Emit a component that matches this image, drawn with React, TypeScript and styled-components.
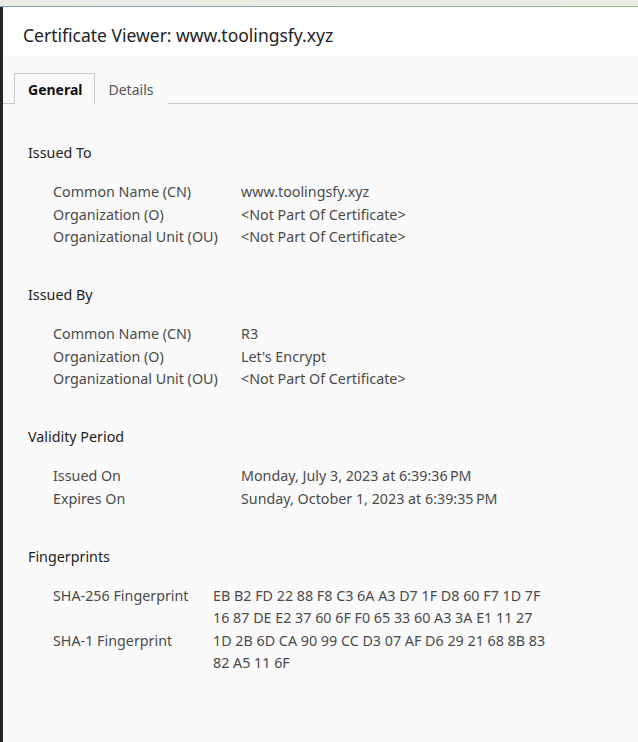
import React from "react";
import styled, { createGlobalStyle } from "styled-components";

const Global = createGlobalStyle`
  html, body { margin: 0; padding: 0; }
  body { font-family: "Noto Sans", "Open Sans", sans-serif; background: #fafafa; }
`;

const Page = styled.div`
  width: 638px;
  height: 742px;
  display: flex;
  flex-direction: column;
  background: #e9ebe5;
  overflow: hidden;
`;

const TopStrip = styled.div`
  height: 6px;
  flex: none;
`;

const Accent = styled.div`
  height: 1px;
  flex: none;
  background: linear-gradient(90deg, #7f9fc4 0%, #86b5a0 50%, #8cc58a 100%);
`;

const Body = styled.div`
  flex: 1;
  display: flex;
  min-height: 0;
`;

const LeftEdge = styled.div`
  width: 3px;
  flex: none;
  background: #262626;
`;

const Dialog = styled.div`
  flex: 1;
  display: flex;
  flex-direction: column;
  background: #fafafa;
`;

const Header = styled.div`
  height: 48px;
  background: #ffffff;
  display: flex;
  align-items: flex-end;
  padding: 0 0 8px 20px;
  box-sizing: border-box;
`;

const Title = styled.h1`
  margin: 0;
  font-size: 17.5px;
  font-weight: 400;
  color: #222;
  line-height: 24px;
`;

const TabBar = styled.div`
  display: flex;
  align-items: flex-end;
  padding: 18px 0 0 11px;
  border-bottom: 1px solid #c8c8c8;
`;

const Tab = styled.div<{ $active?: boolean }>`
  height: 31px;
  box-sizing: border-box;
  padding: 0 ${(p) => (p.$active ? "11px 0 13px" : "14px 0 13px")};
  display: flex;
  align-items: center;
  font-size: 14px;
  font-weight: ${(p) => (p.$active ? 700 : 400)};
  color: ${(p) => (p.$active ? "#111" : "#555")};
  border: 1px solid ${(p) => (p.$active ? "#c8c8c8" : "transparent")};
  border-bottom: none;
  margin-bottom: -1px;
  background: #fafafa;
`;

const Panel = styled.div`
  padding: 39px 0 0 25px;
  display: flex;
  flex-direction: column;
`;

const Section = styled.section`
  margin-bottom: 36.5px;
`;

const SectionTitle = styled.div`
  font-size: 14.3px;
  color: #222;
  line-height: 20px;
  margin-bottom: 18px;
`;

const Grid = styled.div<{ $labelWidth: number }>`
  display: grid;
  grid-template-columns: ${(p) => p.$labelWidth}px 340px;
  padding-left: 25px;
  font-size: 14.3px;
  line-height: 22.5px;
  color: #4a4a4a;
`;

const Label = styled.div``;
const Value = styled.div``;

type Row = [string, string];

const sections: { title: string; labelWidth: number; rows: Row[] }[] = [
  {
    title: "Issued To",
    labelWidth: 188,
    rows: [
      ["Common Name (CN)", "www.toolingsfy.xyz"],
      ["Organization (O)", "<Not Part Of Certificate>"],
      ["Organizational Unit (OU)", "<Not Part Of Certificate>"],
    ],
  },
  {
    title: "Issued By",
    labelWidth: 188,
    rows: [
      ["Common Name (CN)", "R3"],
      ["Organization (O)", "Let's Encrypt"],
      ["Organizational Unit (OU)", "<Not Part Of Certificate>"],
    ],
  },
  {
    title: "Validity Period",
    labelWidth: 188,
    rows: [
      ["Issued On", "Monday, July 3, 2023 at 6:39:36\u202fPM"],
      ["Expires On", "Sunday, October 1, 2023 at 6:39:35\u202fPM"],
    ],
  },
  {
    title: "Fingerprints",
    labelWidth: 160,
    rows: [
      ["SHA-256 Fingerprint", "EB B2 FD 22 88 F8 C3 6A A3 D7 1F D8 60 F7 1D 7F 16 87 DE E2 37 60 6F F0 65 33 60 A3 3A E1 11 27"],
      ["SHA-1 Fingerprint", "1D 2B 6D CA 90 99 CC D3 07 AF D6 29 21 68 8B 83 82 A5 11 6F"],
    ],
  },
];

export default function App() {
  return (
    <Page>
      <Global />
      <TopStrip />
      <Accent />
      <Body>
        <LeftEdge />
        <Dialog>
          <Header>
            <Title>Certificate Viewer: www.toolingsfy.xyz</Title>
          </Header>
          <TabBar>
            <Tab $active>General</Tab>
            <Tab>Details</Tab>
          </TabBar>
          <Panel>
            {sections.map((s) => (
              <Section key={s.title}>
                <SectionTitle>{s.title}</SectionTitle>
                <Grid $labelWidth={s.labelWidth}>
                  {s.rows.map(([l, v]) => (
                    <React.Fragment key={l}>
                      <Label>{l}</Label>
                      <Value>{v}</Value>
                    </React.Fragment>
                  ))}
                </Grid>
              </Section>
            ))}
          </Panel>
        </Dialog>
      </Body>
    </Page>
  );
}
